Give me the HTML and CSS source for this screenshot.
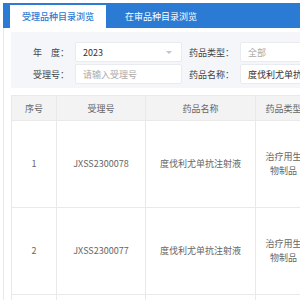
FILE: index.html
```html
<!DOCTYPE html>
<html lang="zh-CN">

<head>
    <meta charset="UTF-8">
    <meta name="viewport" content="width=device-width, initial-scale=1.0">
    <link rel="stylesheet" href="styles.css">
    <title>受理品种目录浏览</title>
</head>

<body>
    <div class="page">

        <div class="tabs">
            <div class="tab active">受理品种目录浏览</div>
            <div class="tab">在审品种目录浏览</div>
        </div>

        <div class="content">
            <form class="filter">
                <label class="label">年　度：</label>
                <div class="field select">
                    <span>2023</span>
                    <span class="arrow"></span>
                </div>
                <label class="label label-right">药品类型：</label>
                <div class="field placeholder">全部</div>

                <label class="label">受理号：</label>
                <div class="field placeholder">请输入受理号</div>
                <label class="label label-right">药品名称：</label>
                <div class="field">度伐利尤单抗注射液</div>
            </form>

            <table class="grid">
                <colgroup>
                    <col style="width: 45px">
                    <col style="width: 89px">
                    <col style="width: 110px">
                    <col style="width: 56px">
                    <col style="width: 90px">
                </colgroup>
                <thead>
                    <tr>
                        <th>序号</th>
                        <th>受理号</th>
                        <th>药品名称</th>
                        <th>药品类型</th>
                        <th>申请类型</th>
                    </tr>
                </thead>
                <tbody>
                    <tr>
                        <td>1</td>
                        <td>JXSS2300078</td>
                        <td>度伐利尤单抗注射液</td>
                        <td>治疗用生物制品</td>
                        <td>进口</td>
                    </tr>
                    <tr>
                        <td>2</td>
                        <td>JXSS2300077</td>
                        <td>度伐利尤单抗注射液</td>
                        <td>治疗用生物制品</td>
                        <td>进口</td>
                    </tr>
                    <tr>
                        <td>3</td>
                        <td>JXSS2300076</td>
                        <td>度伐利尤单抗注射液</td>
                        <td>治疗用生物制品</td>
                        <td>进口</td>
                    </tr>
                </tbody>
            </table>
        </div>

    </div>
</body>

</html>
```

FILE: styles.css
```css
html {
    box-sizing: border-box;
}

*,
*::before,
*::after {
    margin: 0;
    padding: 0;
    box-sizing: inherit;
}

body {
    font-family: "Noto Sans CJK SC", "Noto Sans", sans-serif;
    font-size: 9px;
    color: #333;
    background-color: #fff;
    overflow: hidden;
    height: 300px;
}

.page {
    margin: 3px 0 0 3px;
    width: 400px;
}

.tabs {
    display: flex;
    align-items: flex-end;
    height: 25px;
    padding-left: 7px;
    background-color: #2b7ad4;
}

.tab {
    height: 23px;
    line-height: 23px;
    padding: 0 12px;
    margin-right: 7px;
    color: #fff;
}

.tab.active {
    background-color: #fff;
    color: #2b7ad4;
    font-weight: 500;
}

.content {
    border-left: 1px solid #e6eaf0;
    padding: 4px 0 0 7px;
    height: 280px;
}

.filter {
    display: grid;
    grid-template-columns: 64px 107px 58px 107px;
    grid-auto-rows: 20px;
    row-gap: 2px;
    align-items: center;
    padding: 10px 0 4px;
    background-color: #f4f6f9;
}

.label {
    text-align: right;
    padding-right: 6px;
    color: #444;
    white-space: nowrap;
}

.label-right {
    text-align: left;
    padding: 0 0 0 7px;
}

.field {
    display: flex;
    align-items: center;
    justify-content: space-between;
    height: 20px;
    padding: 0 7px;
    background-color: #fff;
    border: 1px solid #e8ebf0;
    border-radius: 2px;
    color: #333;
    white-space: nowrap;
    overflow: hidden;
}

.placeholder {
    color: #aaa;
}

.arrow {
    width: 0;
    height: 0;
    border-left: 3px solid transparent;
    border-right: 3px solid transparent;
    border-top: 3px solid #c0c4cc;
    margin-right: 2px;
}

.grid {
    margin-top: 7px;
    border-collapse: collapse;
    table-layout: fixed;
    width: 390px;
    color: #666;
}

.grid th,
.grid td {
    border: 1px solid #e9e9e9;
    text-align: center;
    padding: 0 8px;
}

.grid th {
    height: 25px;
    font-weight: normal;
    background-color: #f3f3f3;
}

.grid td {
    height: 87px;
    line-height: 14px;
}
```
